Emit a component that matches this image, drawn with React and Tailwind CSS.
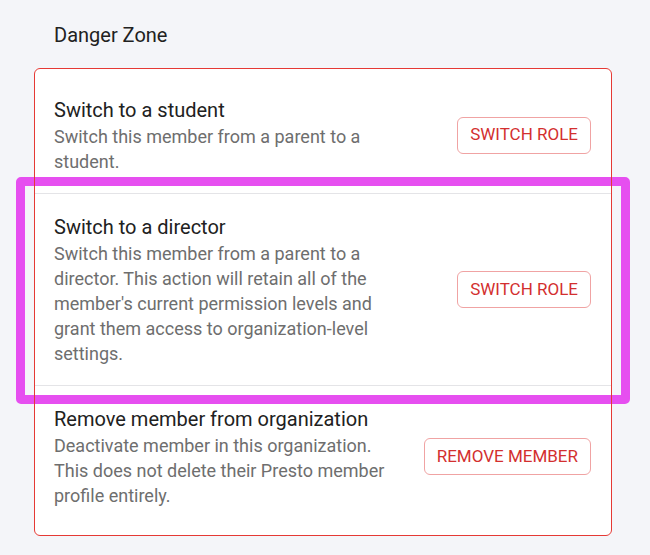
export default function App() {
  const actions = [
    {
      title: 'Switch to a student',
      desc: 'Switch this member from a parent to a student.',
      button: 'Switch role',
    },
    {
      title: 'Switch to a director',
      desc: "Switch this member from a parent to a director. This action will retain all of the member's current permission levels and grant them access to organization-level settings.",
      button: 'Switch role',
    },
    {
      title: 'Remove member from organization',
      desc: 'Deactivate member in this organization. This does not delete their Presto member profile entirely.',
      button: 'Remove member',
    },
  ];

  return (
    <div className="relative min-h-screen bg-[#f4f5f9] font-['Roboto',sans-serif]">
      <div className="pt-[21px] pl-[54px] text-[20px] leading-[28px] text-[#212121]">Danger Zone</div>

      {/* Danger zone card */}
      <div className="relative mt-[19px] ml-[34px] w-[578px] rounded-[6px] bg-white pt-[9px] pb-[9px]">
        {actions.map((a, i) => (
          <div
            key={a.title}
            className={`flex items-center justify-between pl-[20px] pr-[21px] py-[19px] ${i > 0 ? 'border-t border-[#e4e4e7]' : ''}`}
          >
            <div className="w-[340px]">
              <div className="text-[20px] leading-[28px] text-[#212121]">{a.title}</div>
              <div className="text-[18px] leading-[25px] text-[#6e6e6e]">{a.desc}</div>
            </div>
            <button className="h-[37px] rounded-[6px] border border-[#f0a3a3] bg-white px-[12px] text-[17px] font-normal uppercase text-[#d32f2f]">
              {a.button}
            </button>
          </div>
        ))}
        <div className="pointer-events-none absolute inset-0 z-20 rounded-[6px] border border-[#e53935]" />
      </div>

      {/* highlight around the director row */}
      <div className="pointer-events-none absolute left-[16px] top-[177px] z-10 h-[227px] w-[614px] rounded-[5px] border-[9px] border-[#e64ff0]" />
    </div>
  );
}
